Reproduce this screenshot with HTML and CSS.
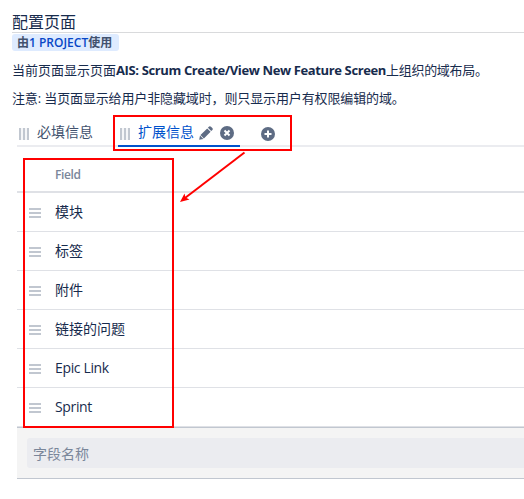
FILE: index.html
```html
<!DOCTYPE html>
<html lang="zh-CN">
<head>
<meta charset="utf-8">
<title>配置页面</title>
<link rel="stylesheet" href="styles.css">
</head>
<body>
<header class="page-header">
  <h1>配置页面</h1>
</header>
<main>
  <div class="usage"><span class="lozenge">由<a>1 PROJECT</a>使用</span></div>
  <p class="intro">当前页面显示页面<strong>AIS: Scrum Create/View New Feature Screen</strong><span class="tail">上组织的域布局。</span></p>
  <p class="note">注意: 当页面显示给用户非隐藏域时，则只显示用户有权限编辑的域。</p>
  <nav class="tabs">
    <div class="tab"><i class="grip"></i><span>必填信息</span></div>
    <div class="tab active"><i class="grip"></i><span>扩展信息</span>
      <svg class="pencil" width="14" height="14" viewBox="0 0 14 14"><path d="M0.2 13.8 1 9.6 4.4 13z M1.5 9 8.2 2.4 11.6 5.8 4.9 12.5z M8.9 1.8 10.1.6Q11-.2 12 .7L13.3 2Q14.2 3 13.400 3.900L12.200 5.100z"/></svg>
      <svg class="close" width="14" height="14" viewBox="0 0 14 14"><circle cx="7" cy="7" r="7"/><path class="mark" d="M4.500 4.500 9.500 9.500M9.500 4.500 4.500 9.500"/></svg>
    </div>
    <div class="tab-add"><svg width="14" height="14" viewBox="0 0 14 14"><circle cx="7" cy="7" r="7"/><path class="mark" d="M7 3.500v7M3.500 7h7"/></svg></div>
  </nav>
  <section class="fields">
    <div class="head">Field</div>
    <div class="row"><i class="handle"></i><span>模块</span></div>
    <div class="row"><i class="handle"></i><span>标签</span></div>
    <div class="row"><i class="handle"></i><span>附件</span></div>
    <div class="row"><i class="handle"></i><span>链接的问题</span></div>
    <div class="row"><i class="handle"></i><span class="latin">Epic Link</span></div>
    <div class="row"><i class="handle"></i><span class="latin">Sprint</span></div>
    <div class="add-row"><div class="field-input">字段名称</div></div>
  </section>
</main>
<svg class="annotations" width="524" height="499" viewBox="0 0 524 499">
  <rect x="114" y="116" width="177" height="34"/>
  <rect x="24" y="159" width="149" height="268"/>
  <path d="M244.500 152.500 185 198"/>
  <path class="tip" d="M180 202 184.500 193.500 185.500 197.500 189.500 199.500z"/>
</svg>
</body>
</html>
```
FILE: styles.css
```css
* { box-sizing: border-box; }
body {
  margin: 0;
  height: 499px;
  overflow: hidden;
  position: relative;
  background: #fff;
  color: #172b4d;
  font: 13px/20px "Open Sans", "Noto Sans CJK SC", sans-serif;
}
.page-header {
  margin-left: 12px;
  height: 33px;
  padding-top: 12px;
  border-bottom: 1px solid #d9dadc;
}
h1 { margin: 0; font-size: 16px; line-height: 20px; font-weight: 400; }
.usage { margin: 1px 0 0 12px; height: 17px; display: flex; }
.lozenge {
  width: 107px;
  padding-left: 5px;
  border-radius: 3px;
  background: #deebff;
  color: #42526e;
  font-size: 12px;
  line-height: 17px;
  font-weight: 600;
  white-space: nowrap;
}
.lozenge a { color: #0747c6; }
p { margin: 0 0 0 12px; white-space: nowrap; }
strong { letter-spacing: -0.37px; }
.tail { letter-spacing: -0.3px; }
.intro { margin-top: 9px; }
.note { margin-top: 8px; letter-spacing: -0.13px; }
.tabs {
  display: flex;
  margin: 10px 0 0 17px;
  height: 29px;
  background: linear-gradient(#ebecf0, #ebecf0) 0 100% / 100% 2px no-repeat;
}
.tab { display: flex; align-items: flex-start; padding: 4px 0 0 2px; width: 96px; font-size: 14px; color: #42526e; }
.tab span { margin-left: 8px; }
.tab.active { width: 122px; margin-left: 5px; color: #0052cc; border-bottom: 2px solid #0052cc; }
.grip { width: 10px; height: 12px; margin-top: 6px; background: repeating-linear-gradient(90deg, #c1c7d0 0 2px, #f5f6f8 2px 4px); }
.tab svg { margin-top: 4px; fill: #5e6c84; }
.pencil { margin-left: 5px; }
.close { margin-left: 7px; }
.tab-add { padding: 9px 0 0 21px; }
.tab-add svg { display: block; fill: #5e6c84; }
.mark { stroke: #fff; stroke-width: 2; fill: none; }
.fields { margin-left: 17px; }
.head {
  height: 46px;
  padding: 18px 0 0 38px;
  border-bottom: 2px solid #dfe1e6;
  color: #7a869a;
  font-size: 12px;
  font-weight: 600;
  letter-spacing: -0.4px;
}
.row { display: flex; align-items: center; height: 39px; padding-left: 12px; border-bottom: 1px solid #dfe1e6; font-size: 14px; }
.row span { margin-left: 14px; }
.latin { letter-spacing: -0.35px; }
.handle { width: 12px; height: 10px; margin-top: 2px; background: repeating-linear-gradient(#c1c7d0 0 2px, transparent 2px 4px); }
.add-row { height: 52px; padding: 10px 0 10px 10px; border-top: 1px solid #c1c7d0; border-bottom: 1px solid #c1c7d0; background: #f4f4f4; }
.field-input { height: 30px; padding-left: 6px; border-radius: 3px 0 0 3px; background: #ebecf0; color: #7a869a; font-size: 14px; line-height: 32px; }
.annotations { position: absolute; left: 0; top: 0; fill: none; stroke: #f00; stroke-width: 2; }
.tip { fill: #f00; stroke: none; }
```
